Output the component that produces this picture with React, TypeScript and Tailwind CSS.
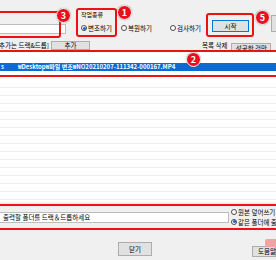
import React from "react";

const Radio = ({ checked, label, className = "" }: { checked?: boolean; label: string; className?: string }) => (
  <div className={`flex items-center gap-[1px] whitespace-nowrap ${className}`}>
    <span className="flex h-[6px] w-[6px] shrink-0 items-center justify-center rounded-full border border-[#4a4a4a] bg-white">
      {checked && <span className="h-[3px] w-[3px] rounded-full bg-[#1a5fd0]" />}
    </span>
    <span>{label}</span>
  </div>
);

const Badge = ({ n, className }: { n: number; className: string }) => (
  <div
    className={`absolute flex h-[15px] w-[15px] items-center justify-center rounded-full border border-white bg-[#e8101c] text-[9px] font-bold leading-none text-white shadow-[0_0_1px_rgba(0,0,0,0.5)] ${className}`}
  >
    {n}
  </div>
);

export default function App() {
  return (
    <div className="relative h-[260px] w-[276px] overflow-hidden bg-[#f0f0f0] font-['Noto_Sans_CJK_KR',sans-serif] text-[6.5px] leading-none text-black">
      {/* 상단: 입력 + 작업종류 + 시작 */}
      <div className="flex h-[41px]">
        <div className="w-[66px] shrink-0 pt-[24px]">
          <div className="-ml-px h-[10px] w-[67px] border border-[#bcbcbc] bg-white" />
        </div>
        <div className="ml-[15px] flex w-[124px] shrink-0 flex-col pt-[11px]">
          <div className="h-[8px] leading-[8px] text-[6px]">작업종류</div>
          <div className="mt-[5px] flex h-[8px] items-center">
            <Radio checked label="변조하기" className="w-[40px]" />
            <Radio label="복원하기" className="w-[49px]" />
            <Radio label="검사하기" />
          </div>
        </div>
        <div className="ml-[7px] mt-[20px] flex h-[12px] w-[37px] shrink-0 items-center justify-center border border-[#0078d7] bg-[#e1e1e1]">
          시작
        </div>
        <div className="ml-[22px] mt-[15px] h-[17px] w-[10px] shrink-0 border border-[#adadad] bg-[#e1e1e1]" />
      </div>

      {/* 목록 버튼 줄 */}
      <div className="flex h-[9px] items-center">
        <div className="flex w-[49px] shrink-0 justify-end overflow-hidden whitespace-nowrap">[파일 추가는 드랙&amp;드롭]</div>
        <div className="ml-[2px] flex h-[9px] w-[39px] shrink-0 items-center justify-center border border-[#adadad] bg-[#e1e1e1]">
          추가
        </div>
        <div className="ml-[112px] whitespace-nowrap">목록 삭제</div>
        <div className="ml-[4px] mt-[3px] flex h-[8px] w-[40px] shrink-0 items-start justify-center border border-[#adadad] bg-[#e1e1e1] pt-[1px] whitespace-nowrap">
          성공한 것만
        </div>
      </div>

      {/* 파일 목록 */}
      <div className="flex h-[152px] flex-col bg-white">
        <div className="h-[13px] shrink-0" />
        <div className="flex h-[8px] shrink-0 items-center bg-[#0a6ad6] text-[6px] font-bold text-white whitespace-nowrap">
          <span className="ml-[1px] w-[17px]">s</span>
          <span>₩Desktop₩파일 변조₩NO20210207-111342-000167.MP4</span>
        </div>
        <div className="h-[16px] shrink-0" />
        {Array.from({ length: 15 }).map((_, i) => (
          <div key={i} className="h-[8px] shrink-0 border-t border-[#ececec]" />
        ))}
      </div>

      {/* 출력 폴더 */}
      <div className="mt-[2px] flex h-[26px] items-center">
        <div className="-ml-px mt-[1px] flex h-[11px] w-[230px] shrink-0 items-center border border-[#bcbcbc] bg-white pl-[3px] whitespace-nowrap">
          출력할 폴더를 드랙＆드롭하세요
        </div>
        <div className="ml-[2px] flex flex-col gap-[3px]">
          <Radio label="원본 덮어쓰기" />
          <Radio checked label="같은 폴더에 출력" />
        </div>
      </div>

      {/* 하단 버튼 */}
      <div className="flex">
        <div className="ml-[118px] mt-[12px] flex h-[14px] w-[39px] items-center justify-center border border-[#adadad] bg-[#e1e1e1]">
          닫기
        </div>
        <div className="ml-[100px] mt-[16px] flex h-[11px] w-[24px] shrink-0 items-center border border-[#adadad] bg-[#e1e1e1] pl-[5px] whitespace-nowrap">
          도움말
        </div>
      </div>

      {/* 주석 표시 */}
      <div className="absolute left-[-4px] top-[11px] h-[27px] w-[65px] rounded-[3px] border-2 border-[#ee1111]" />
      <div className="absolute left-[76px] top-[8px] h-[29px] w-[41px] rounded-[3px] border-2 border-[#ee1111]" />
      <div className="absolute left-[206px] top-[13px] h-[24px] w-[48px] rounded-[3px] border-2 border-[#ee1111]" />
      <div className="absolute left-[-4px] top-[50px] h-[27px] w-[284px] rounded-[3px] border-2 border-[#ee1111]" />
      <div className="absolute left-[-4px] top-[204px] h-[26px] w-[284px] rounded-[3px] border-2 border-[#ee1111]" />
      <div className="absolute left-[265px] top-[239px] h-[8px] w-[14px] rounded-[2px] bg-[#f2a4a4]" />
      <Badge n={3} className="left-[56px] top-[8px]" />
      <Badge n={1} className="left-[117px] top-[5px]" />
      <Badge n={5} className="left-[255px] top-[10px]" />
      <Badge n={2} className="left-[186px] top-[52px]" />
    </div>
  );
}
